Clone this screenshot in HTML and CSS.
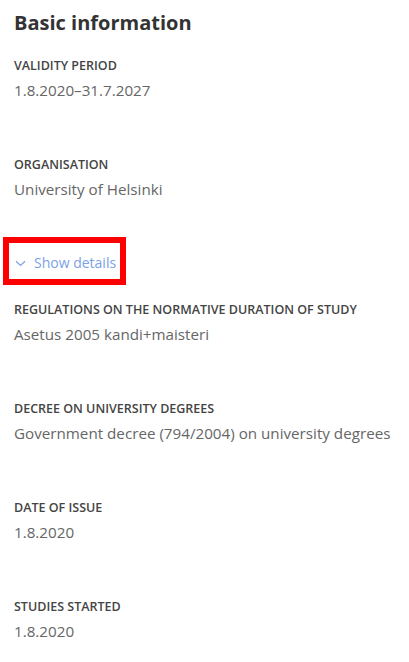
FILE: index.html
```html
<!DOCTYPE html>
<html lang="en">

<head>
    <meta charset="UTF-8">
    <meta name="viewport" content="width=device-width, initial-scale=1.0">
    <title>Basic information</title>
    <link rel="stylesheet" href="styles.css">
</head>

<body>
    <div class="container">
        <h2>Basic information</h2>

        <div class="field">
            <div class="field-label">Validity period</div>
            <div class="field-value">1.8.2020–31.7.2027</div>
        </div>

        <div class="field">
            <div class="field-label">Organisation</div>
            <div class="field-value">University of Helsinki</div>
        </div>

        <button type="button" class="toggle">
            <svg class="chevron" width="11" height="7" viewBox="0 0 11 7">
                <path d="M1 1.2 L5.5 5.5 L10 1.2" fill="none" stroke="currentColor" stroke-width="1.2"></path>
            </svg>
            Show details
        </button>

        <div class="field">
            <div class="field-label">Regulations on the normative duration of study</div>
            <div class="field-value">Asetus 2005 kandi+maisteri</div>
        </div>

        <div class="field">
            <div class="field-label">Decree on university degrees</div>
            <div class="field-value">Government decree (794/2004) on university degrees</div>
        </div>

        <div class="field">
            <div class="field-label">Date of issue</div>
            <div class="field-value">1.8.2020</div>
        </div>

        <div class="field">
            <div class="field-label">Studies started</div>
            <div class="field-value">1.8.2020</div>
        </div>
    </div>
</body>

</html>
```

FILE: styles.css
```css
body {
    font-family: "Open Sans", Arial, sans-serif;
    background-color: #fff;
    margin: 0;
}

.container {
    padding: 7px 14px 0;
}

h2 {
    font-size: 20px;
    font-weight: 700;
    color: #333;
    margin: 0 0 18px 0;
    line-height: 32px;
}

.field {
    margin-bottom: 54px;
}

.field:last-child {
    margin-bottom: 0;
}

.field-label {
    font-size: 12.5px;
    font-weight: 600;
    text-transform: uppercase;
    color: #444;
    line-height: 18px;
    margin-bottom: 3px;
}

.field-value {
    font-size: 15.2px;
    color: #666;
    line-height: 24px;
}

.toggle {
    display: flex;
    align-items: center;
    gap: 8px;
    background: #fff;
    border: none;
    font-family: inherit;
    font-size: 14px;
    line-height: 20px;
    color: #7ba1e6;
    padding: 10px 4px 6px 6px;
    margin: -12px 0 22px -5px;
    outline: 6px solid red;
    cursor: pointer;
}
```
